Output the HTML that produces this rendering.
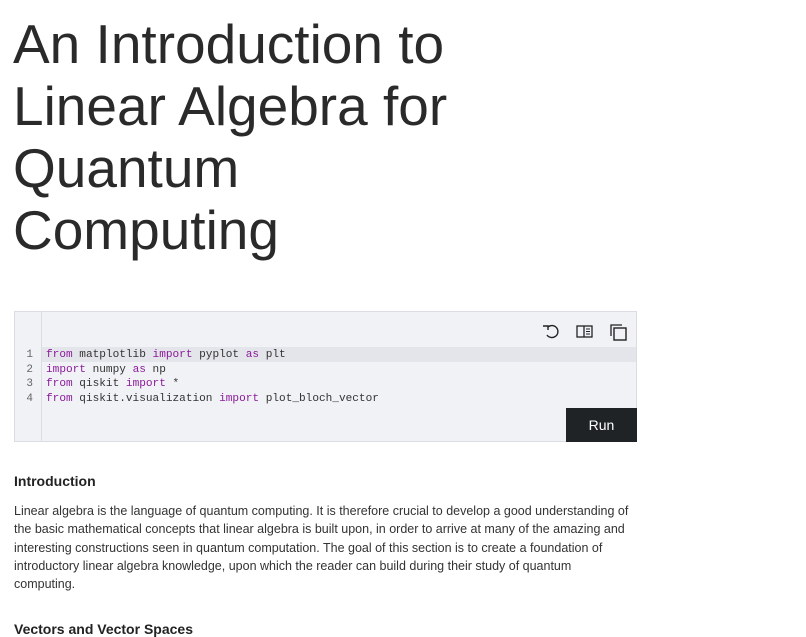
<!DOCTYPE html>
<html><head><style>
body{margin:0;background:#fff;width:806px;height:628px;overflow:hidden;font-family:"Liberation Sans",sans-serif;color:#161616}
h1{position:absolute;left:13px;top:13px;margin:0;font-weight:300;font-size:55px;line-height:62px;width:460px;letter-spacing:0px;color:#2a2a2a}
.code{position:absolute;left:14px;top:311px;width:621px;height:129px;background:#f1f2f6;border:1px solid #dcdde2}
.gut{position:absolute;left:0;top:0;width:26px;height:129px;border-right:1px solid #dcdde2;background:#f1f2f6}
.hl{position:absolute;left:0;top:35px;width:621px;height:15px;background:#e4e5ea}
.ln{position:absolute;left:0;width:18px;text-align:right;font:11px/14.7px "Liberation Mono",monospace;color:#666}
.cl{position:absolute;left:31px;font:11.1px/14.7px "Liberation Mono",monospace;color:#333;white-space:pre}
.k{color:#8a1a9a}
.run{position:absolute;right:-1px;bottom:-1px;width:71px;height:34px;background:#1f2326;color:#fff;font-size:14px;line-height:34px;text-align:center}
h3{position:absolute;left:14px;top:473px;margin:0;font-size:14px;font-weight:bold;color:#222}
p{position:absolute;left:14px;top:502px;margin:0;width:640px;font-size:12.5px;line-height:18.3px;color:#333;white-space:nowrap}
h3.b{top:621px}
</style></head><body>
<h1>An Introduction to Linear Algebra for Quantum Computing</h1>
<div class="code">
<div class="hl"></div>
<div class="gut"></div>
<svg style="position:absolute;left:528px;top:11px" width="90" height="18" viewBox="0 0 90 18">
<path d="M5 4 A6 6 0 1 1 4 12" fill="none" stroke="#222" stroke-width="1.4"/><path d="M1 3 L6 3 L6 7" fill="none" stroke="#222" stroke-width="1.4" transform="translate(-1,0)"/>
<rect x="34" y="3" width="15" height="11" fill="none" stroke="#222" stroke-width="1.3"/><line x1="41" y1="3" x2="41" y2="14" stroke="#222" stroke-width="1.3"/><line x1="43" y1="6" x2="47" y2="6" stroke="#222"/><line x1="43" y1="8.5" x2="47" y2="8.5" stroke="#222"/><line x1="43" y1="11" x2="47" y2="11" stroke="#222"/>
<rect x="71" y="5" width="12" height="12" fill="none" stroke="#222" stroke-width="1.4"/><path d="M68 13 V2 H79" fill="none" stroke="#222" stroke-width="1.3"/>
</svg>
<div class="ln" style="top:36px">1</div><div class="ln" style="top:50.5px">2</div><div class="ln" style="top:65px">3</div><div class="ln" style="top:80px">4</div>
<div class="cl" style="top:36px"><span class="k">from</span> matplotlib <span class="k">import</span> pyplot <span class="k">as</span> plt</div>
<div class="cl" style="top:50.5px"><span class="k">import</span> numpy <span class="k">as</span> np</div>
<div class="cl" style="top:65px"><span class="k">from</span> qiskit <span class="k">import</span> *</div>
<div class="cl" style="top:80px"><span class="k">from</span> qiskit.visualization <span class="k">import</span> plot_bloch_vector</div>
<div class="run">Run</div>
</div>
<h3>Introduction</h3>
<p>Linear algebra is the language of quantum computing. It is therefore crucial to develop a good understanding of<br>the basic mathematical concepts that linear algebra is built upon, in order to arrive at many of the amazing and<br>interesting constructions seen in quantum computation. The goal of this section is to create a foundation of<br>introductory linear algebra knowledge, upon which the reader can build during their study of quantum<br>computing.</p>
<h3 class="b">Vectors and Vector Spaces</h3>
</body></html>
